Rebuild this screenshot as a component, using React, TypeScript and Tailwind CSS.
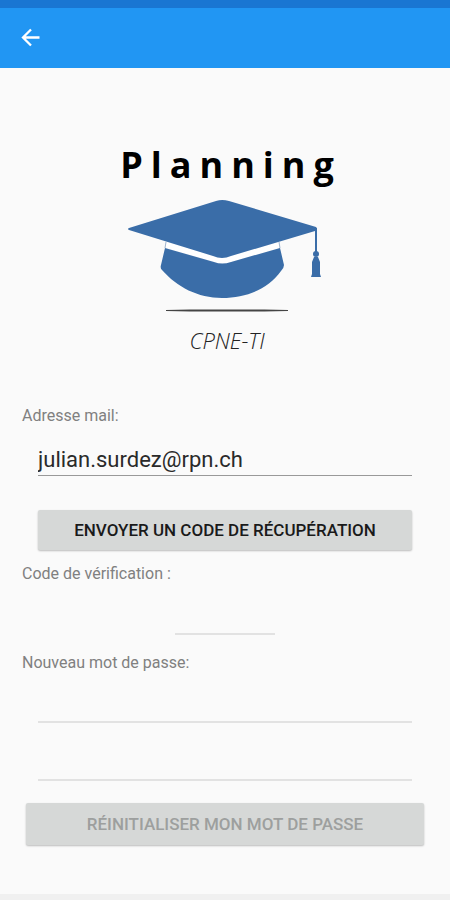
import { FormEvent, useState } from "react";

const labelClass = "block text-base leading-6 text-[#808080]";
const fieldClass = "block w-full bg-transparent border-b-2 border-[#e2e2e2] text-[22px] text-[#2a2a2a] outline-none";
const buttonClass = "block rounded-xs bg-[#d6d8d7] text-[17px] leading-6 uppercase shadow-[0_1px_2px_rgba(0,0,0,0.25)]";

function Logo() {
  return (
    <div className="flex flex-col items-center pt-[72px]">
      <h1 className="pl-3 font-['Open_Sans','Noto_Sans',sans-serif] text-[36px] leading-[50px] font-bold tracking-[8px] text-black">
        Planning
      </h1>
      <svg viewBox="105 190 240 126" className="w-[240px] h-[126px]" aria-hidden="true">
        <path d="M166 242 L166 248 L215 262 Q223 265 231 262 L279 248 L279 242 L223 258 Z" fill="#fff" />
        <path
          d="M129 228 L216 201 Q222 199 229 201 L316 227 Q318 229 315 231 L231 256 Q222 260 213 256 L129 230 Q127 229 129 228 Z"
          fill="#3a6da8"
        />
        <path
          d="M165 248 L214 262 Q222 265 231 262 L280 248 L284 265 Q284 268 281 271 C268 289 247 298 222 298 C198 298 177 287 162 270 Q160 268 161 265 Z"
          fill="#3a6da8"
        />
        <path d="M166 242 L165 248 M279 242 L280 248" stroke="#9fb4ce" strokeWidth="1" />
        <path d="M314 229 H316 V252" fill="none" stroke="#3a6da8" strokeWidth="2" />
        <circle cx="316" cy="254" r="3" fill="#3a6da8" />
        <path d="M314 257 H318 L320 262 V274 L321 277 H311 L312 274 V262 Z" fill="#3a6da8" />
        <path d="M166 310 L190 309.500 H264 L288 310 V311 L264 311.500 H190 L166 311 Z" fill="#444" />
      </svg>
      <p className="pt-2 pl-1 font-['Open_Sans','Noto_Sans',sans-serif] text-[22px] leading-8 font-light italic text-[#222]">
        CPNE-TI
      </p>
    </div>
  );
}

export default function App() {
  const [email, setEmail] = useState("julian.surdez@rpn.ch");
  const [code, setCode] = useState("");
  const [password, setPassword] = useState("");
  const [confirmation, setConfirmation] = useState("");

  const handleSubmit = (e: FormEvent) => {
    e.preventDefault();
  };

  return (
    <div className="flex min-h-screen flex-col bg-[#fafafa] font-[Roboto,sans-serif]">
      {/* Status bar + app bar */}
      <header className="border-t-8 border-[#1976d2] bg-[#2196f3]">
        <div className="flex h-[60px] items-center px-5">
          <button type="button" aria-label="Retour" className="text-white">
            <svg viewBox="0 0 22 22" className="size-[22px]" fill="none" stroke="currentColor" strokeWidth="2.300">
              <path d="M19.500 10.500 H3.500 M11 2.500 L3 10.500 L11 18.500" />
            </svg>
          </button>
        </div>
      </header>

      <main className="flex-1">
        <Logo />

        <form onSubmit={handleSubmit} className="px-[22px] pt-12 pb-12">
          <label htmlFor="email" className={labelClass}>Adresse mail:</label>
          <div className="px-4">
            <input
              id="email"
              type="email"
              value={email}
              onChange={(e) => setEmail(e.target.value)}
              className="block h-12 w-full border-b border-[#999] bg-transparent pt-4 text-[22px] text-[#2a2a2a] outline-none"
            />
            <button type="button" className={`${buttonClass} mt-[34px] h-10 w-full font-medium text-[#1a1a1a]`}>
              Envoyer un code de récupération
            </button>
          </div>

          <label htmlFor="code" className={`${labelClass} mt-3`}>Code de vérification :</label>
          <div className="mx-auto w-[100px]">
            <input
              id="code"
              type="text"
              value={code}
              onChange={(e) => setCode(e.target.value)}
              className={`${fieldClass} h-[49px] text-center`}
            />
          </div>

          <label htmlFor="password" className={`${labelClass} mt-4`}>Nouveau mot de passe:</label>
          <div className="px-4">
            <input
              id="password"
              type="password"
              value={password}
              onChange={(e) => setPassword(e.target.value)}
              className={`${fieldClass} h-12`}
            />
            <input
              type="password"
              aria-label="Confirmer le mot de passe"
              value={confirmation}
              onChange={(e) => setConfirmation(e.target.value)}
              className={`${fieldClass} h-[58px]`}
            />
          </div>

          <div className="px-1">
            <button type="submit" disabled className={`${buttonClass} mt-[22px] h-[42px] w-full font-medium text-[#9d9f9e]`}>
              Réinitialiser mon mot de passe
            </button>
          </div>
        </form>
      </main>

      <footer className="h-[6px] bg-[#f0f0f0]" />
    </div>
  );
}
